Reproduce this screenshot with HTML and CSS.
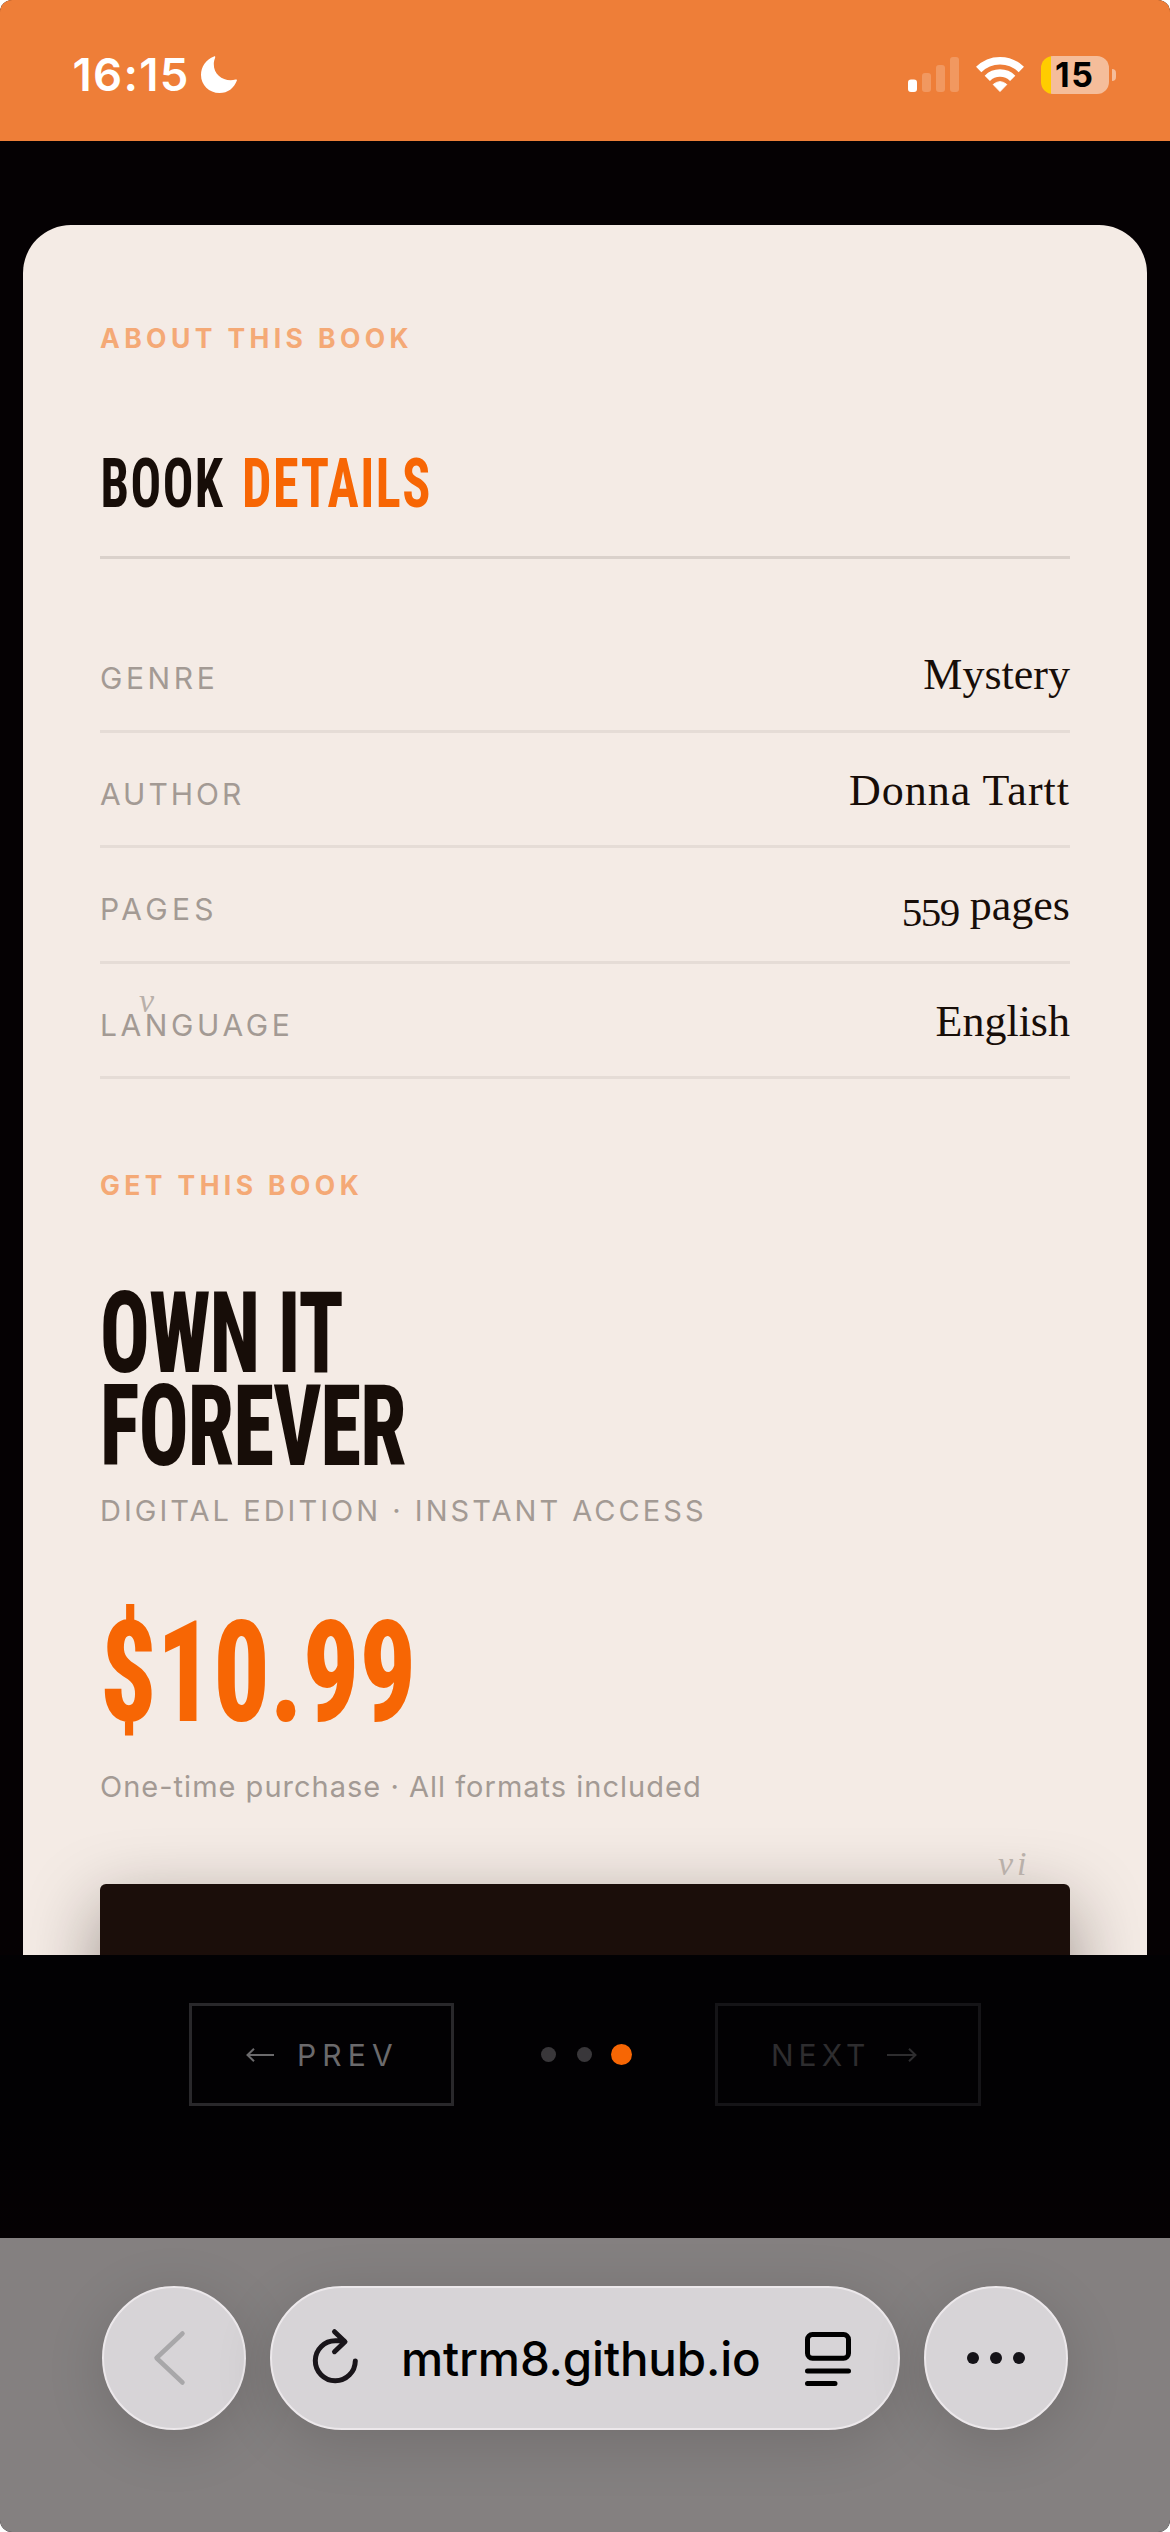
FILE: index.html
```html
<!DOCTYPE html>
<html lang="en">
<head>
<meta charset="utf-8">
<title>Book details</title>
<link rel="stylesheet" href="styles.css">
</head>
<body>
<div class="phone">
  <header class="status">
    <span class="clock">16:15</span>
    <svg class="moon" width="36" height="37" viewBox="0 0 36 37"><path fill="#fff" d="M13 .4C5 3.500 0 10.500 0 19c0 10 8 18 18.500 18C27 37 33 32 35.800 24.700c.4-1-.3-1.500-1.300-1.100C24 26.500 12.500 19.500 12.800 8c0-2.500.6-4.500 1.300-6.300C14.600.6 14 0 13 .4z"/></svg>
    <div class="indicators">
      <svg width="51" height="35" viewBox="0 0 51 35" fill="#fff"><rect y="22.500" width="9" height="12.500" rx="3"/><g opacity=".2"><rect x="14" y="16" width="9" height="19" rx="3"/><rect x="28" y="8" width="9" height="27" rx="3"/><rect x="42" width="9" height="35" rx="3"/></g></svg>
      <svg width="48" height="38" viewBox="0 0 48 38" fill="none" stroke="#fff" stroke-width="7.500"><path d="M2.700 13.500a30 30 0 0 1 42.600 0M11.300 22.300a18 18 0 0 1 25.400 0"/><path fill="#fff" stroke="#fff" stroke-width="1" stroke-linejoin="round" d="M24 35.500 17.200 28.500Q24 22.800 30.800 28.500z"/></svg>
      <div class="battery"><span class="cell">15</span><span class="nub"></span></div>
    </div>
  </header>

  <main class="stage">
    <article class="card">
      <p class="eyebrow">ABOUT THIS BOOK</p>
      <h2 class="title">
        <svg width="400" height="80"><text x="0.500" y="67" class="display" textLength="124" lengthAdjust="spacingAndGlyphs">BOOK</text><text x="142" y="67" class="display accent" textLength="190" lengthAdjust="spacingAndGlyphs">DETAILS</text></svg>
      </h2>
      <dl class="facts">
        <div class="fact"><dt>GENRE</dt><dd>Mystery</dd></div>
        <div class="fact author"><dt>AUTHOR</dt><dd>Donna Tartt</dd></div>
        <div class="fact pages"><dt>PAGES</dt><dd><span class="figures">559</span> pages</dd></div>
        <div class="fact language"><dt>LANGUAGE</dt><dd>English</dd></div>
      </dl>
      <p class="eyebrow second">GET THIS BOOK</p>
      <h1 class="headline">
        <svg width="400" height="220"><text x="0" y="102" class="display big" textLength="243" lengthAdjust="spacingAndGlyphs">OWN IT</text><text x="0" y="195" class="display big" textLength="306" lengthAdjust="spacingAndGlyphs">FOREVER</text></svg>
      </h1>
      <p class="edition">DIGITAL EDITION · INSTANT ACCESS</p>
      <div class="price">
        <svg width="400" height="140"><text x="0" y="120.500" class="display cost" textLength="316" lengthAdjust="spacingAndGlyphs">$10.99</text></svg>
      </div>
      <p class="terms">One-time purchase · All formats included</p>
      <div class="buy"></div>
      <span class="folio left">v</span>
      <span class="folio right">vi</span>
    </article>
  </main>

  <nav class="pager">
    <button class="step prev"><svg width="28" height="14" viewBox="0 0 28 14"><path d="M28 7H1.500M8 .8 1.500 7 8 13.200"/></svg><span>PREV</span></button>
    <div class="dots"><i></i><i></i><i class="on"></i></div>
    <button class="step next"><span>NEXT</span><svg width="31" height="14" viewBox="0 0 31 14"><path d="M1 7h28.500M23 .8 29.500 7 23 13.200"/></svg></button>
  </nav>

  <footer class="browser">
    <div class="glass round"><svg class="back" width="31" height="54" viewBox="0 0 31 54"><path d="M28.500 2.500 2.500 27l26 24.500"/></svg></div>
    <div class="glass address">
      <svg width="45" height="58" viewBox="0 0 45 58" fill="none" stroke="#19151a" stroke-width="5" stroke-linecap="round" stroke-linejoin="round"><path d="M42.300 32a20 20 0 1 1-19.800-20.200H31M21.500 2.700l10.500 10-10.500 10"/></svg>
      <span class="url">mtrm8.github.io</span>
      <svg class="reader" width="46" height="58" viewBox="0 0 46 58" fill="none" stroke="#000" stroke-width="5" stroke-linecap="round"><rect x="2.500" y="5.500" width="41" height="23.700" rx="5"/><path d="M2.500 42h41M2.500 54.500H30"/></svg>
    </div>
    <div class="glass round"><svg width="58" height="12" viewBox="0 0 58 12" fill="#151318"><circle cx="6" cy="6" r="6"/><circle cx="29" cy="6" r="6"/><circle cx="52" cy="6" r="6"/></svg></div>
  </footer>
</div>
</body>
</html>
```
FILE: styles.css
```css
* { box-sizing: border-box; margin: 0; padding: 0; }
body { background: #fff; font-family: Inter, "Liberation Sans", sans-serif; }
svg { display: block; flex: none; overflow: visible; }

.phone {
  width: 1170px;
  height: 2532px;
  display: flex;
  flex-direction: column;
  background: #050103;
  border-radius: 12px;
  overflow: hidden;
}

/* Status bar */
.status {
  height: 141px;
  flex: none;
  display: flex;
  align-items: center;
  padding: 8px 54px 0 72.5px;
  background: #ee7e38;
}
.clock { font-size: 45.5px; font-weight: 600; letter-spacing: 1.3px; color: #fff; }
.moon { margin-left: 11px; }
.indicators { margin-left: auto; display: flex; align-items: center; gap: 17px; }
.battery { display: flex; align-items: center; gap: 3px; }
.cell {
  width: 68px;
  height: 38px;
  border-radius: 12px;
  background: linear-gradient(90deg, #ffcc00 10px, #f5bd9a 10px);
  font-size: 34px;
  font-weight: 700;
  line-height: 38px;
  letter-spacing: 1.5px;
  padding-left: 14px;
  color: #000;
}
.nub { width: 4px; height: 12px; border-radius: 0 5px 5px 0; background: #f5bd9a; }

/* Page card */
.stage { height: 1814px; flex: none; padding: 84px 23px 0; overflow: hidden; }
.card {
  position: relative;
  height: 1730px;
  padding: 98px 77px 0;
  background: #f4ebe5;
  border-radius: 48px 48px 0 0;
  overflow: hidden;
}
.eyebrow {
  height: 31px;
  line-height: 31px;
  font-size: 26.5px;
  font-weight: 700;
  letter-spacing: 4.4px;
  color: #f4a976;
}
.eyebrow.second { margin-top: 91px; }
.display {
  font-family: Roboto, sans-serif;
  font-size: 68.5px;
  font-weight: 700;
  font-stretch: 75%;
  letter-spacing: 2px;
  fill: #170d08;
}
.display.accent { fill: #f76604; }
.display.big { font-size: 114px; font-weight: 800; letter-spacing: -1px; }
.display.cost { font-size: 141.5px; font-weight: 800; letter-spacing: 0; fill: #f76604; }
.title { margin-top: 86px; padding-bottom: 36px; border-bottom: 3px solid #dad1cb; }
.facts { margin-top: 58px; }
.fact {
  height: 115.5px;
  display: flex;
  justify-content: space-between;
  align-items: baseline;
  padding-top: 28px;
  border-bottom: 3px solid #e5dcd6;
}
.fact dt { font-size: 30px; letter-spacing: 3.6px; color: #a39a94; }
.fact dd {
  font-family: "Liberation Serif", serif;
  font-size: 44px;
  line-height: 60px;
  color: #170d08;
}
.author dt { letter-spacing: 3px; }
.author dd { letter-spacing: 1px; }
.pages dt { letter-spacing: 4.3px; }
.figures { font-size: 41px; line-height: 40px; letter-spacing: -1.5px; vertical-align: -6px; }
.headline { margin-top: 69px; }
.edition {
  margin-top: 5.5px;
  height: 30px;
  line-height: 30px;
  font-size: 29px;
  letter-spacing: 3.03px;
  color: #a39a94;
}
.price { margin-top: 74.5px; }
.terms {
  margin-top: 29px;
  height: 36px;
  line-height: 36px;
  font-size: 29px;
  letter-spacing: 1.01px;
  color: #a39a94;
}
.buy {
  margin-top: 79px;
  height: 190px;
  border-radius: 6px;
  background: #1b0e0a;
  box-shadow: 0 24px 72px rgba(27, 14, 10, .42);
}
.folio {
  position: absolute;
  font: italic 34px/34px "Liberation Serif", serif;
  letter-spacing: 4px;
  color: #b9b0aa;
}
.folio.left { left: 116px; top: 759px; }
.folio.right { left: 975px; top: 1622px; }

/* Page navigation */
.pager {
  height: 283px;
  flex: none;
  display: flex;
  align-items: flex-start;
  padding: 48px 0 0 189px;
  background: linear-gradient(#020103 60%, #050103);
}
.step {
  width: 265px;
  height: 103px;
  display: flex;
  align-items: center;
  background: none;
  border: 3px solid #29282b;
  font: 30px Inter, sans-serif;
  color: #6b6a6c;
}
.step path { fill: none; stroke: currentColor; stroke-width: 2; }
.prev { padding-left: 54px; gap: 23px; letter-spacing: 6.17px; }
.next { width: 266px; padding-left: 53px; gap: 15.5px; letter-spacing: 5px; border-color: #151417; color: #2e2d2f; }
.dots { display: flex; align-items: center; gap: 21px; height: 103px; margin: 0 83px 0 87px; }
.dots i { width: 15px; height: 15px; border-radius: 50%; background: #39373a; }
.dots .on { width: 21px; height: 21px; margin-left: -2px; background: #f76604; }

/* Browser toolbar */
.browser {
  flex: 1;
  display: flex;
  align-items: flex-start;
  gap: 24px;
  padding: 48px 102px 0;
  background: #848080;
}
.glass {
  height: 144px;
  display: flex;
  align-items: center;
  border: 2px solid #ece8eb;
  border-radius: 72px;
  background: #d7d4d7;
  box-shadow: 0 12px 60px rgba(0, 0, 0, .14);
}
.round { width: 144px; justify-content: center; }
.back { margin-right: 9px; }
.back path { fill: none; stroke: #a8a7a9; stroke-width: 4.5; stroke-linecap: round; stroke-linejoin: round; }
.address { width: 630px; padding: 0 47px 0 41px; }
.url { margin-left: 43px; font-size: 47.5px; font-weight: 500; letter-spacing: -.16px; color: #000; }
.reader { margin-left: auto; }
```
